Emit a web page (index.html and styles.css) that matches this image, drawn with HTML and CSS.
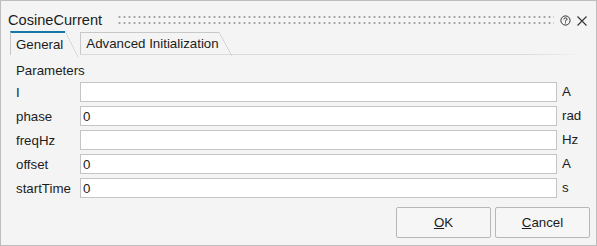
FILE: index.html
```html
<!DOCTYPE html>
<html lang="en">
<head>
    <meta charset="utf-8" />
    <title>CosineCurrent</title>
    <link rel="stylesheet" href="styles.css">
</head>
<body>

    <div class="dialog">

        <div class="titlebar">
            <span class="title">CosineCurrent</span>
            <span class="grip"></span>
            <span class="icon help">
                <svg width="11" height="11" viewBox="0 0 11 11">
                    <circle cx="5.5" cy="5.5" r="4.6" fill="none" stroke="#333" stroke-width="1"/>
                    <path d="M3.9 4.4 Q3.9 2.9 5.5 2.9 Q7.1 2.9 7.1 4.2 Q7.1 5.1 5.5 5.6 L5.5 6.6" fill="none" stroke="#333" stroke-width="1"/>
                    <rect x="5" y="7.3" width="1" height="1.1" fill="#333"/>
                </svg>
            </span>
            <span class="icon close">
                <svg width="10" height="10" viewBox="0 0 10 10">
                    <path d="M0.5 0.5 L9.5 9.5 M9.5 0.5 L0.5 9.5" stroke="#333" stroke-width="1.1"/>
                </svg>
            </span>
        </div>

        <div class="tabstrip">
            <div class="tab active">General</div>
            <div class="tab">Advanced Initialization</div>
            <div class="tabfill"></div>
        </div>

        <div class="panel">
            <div class="group">Parameters</div>

            <div class="params">
                <label>I</label>
                <input class="field" type="text" value="">
                <span class="unit">A</span>

                <label>phase</label>
                <input class="field" type="text" value="0">
                <span class="unit">rad</span>

                <label>freqHz</label>
                <input class="field" type="text" value="">
                <span class="unit">Hz</span>

                <label>offset</label>
                <input class="field" type="text" value="0">
                <span class="unit">A</span>

                <label>startTime</label>
                <input class="field" type="text" value="0">
                <span class="unit">s</span>
            </div>
        </div>

        <div class="footer">
            <button class="btn"><u>O</u>K</button>
            <button class="btn"><u>C</u>ancel</button>
        </div>

    </div>

</body>
</html>
```

FILE: styles.css
```css
body{
    margin: 0;
    background: #f4f4f4;
}

.dialog{
    width: 597px;
    height: 246px;
    box-sizing: border-box;
    border: 1px solid #bdbdbd;
    background: #f4f4f4;
    display: flex;
    flex-direction: column;
    font-family: "Liberation Sans", Arial, sans-serif;
    font-size: 13.3px;
    color: #1c1c1c;
}

/* title bar */
.titlebar{
    height: 30px;
    box-sizing: border-box;
    padding: 11px 9px 0 7px;
    display: flex;
    align-items: flex-start;
}

.title{
    font-size: 14.6px;
    line-height: 17px;
}

.grip{
    flex: 1;
    height: 12px;
    margin: 2px 6px 0 15px;
    background-image: radial-gradient(circle, #a3a3a3 1px, transparent 1.2px);
    background-size: 5px 6px;
    background-position: 0 0;
}

.icon{
    display: flex;
    margin-top: 3px;
}

.icon svg{
    display: block;
}

.close{
    margin-top: 4px;
    margin-left: 6px;
}

/* tabs */
.tabstrip{
    display: flex;
    height: 24px;
    padding-left: 9px;
}

.tab{
    position: relative;
    height: 23px;
    box-sizing: border-box;
    margin-top: 1px;
    margin-right: 15px;
    padding: 3px 2px 0 5px;
    border-left: 1px solid #c8c8c8;
    border-top: 1px solid #c8c8c8;
    border-bottom: 1px solid #dadada;
    line-height: 16px;
    white-space: nowrap;
}

.tab::after{
    content: "";
    position: absolute;
    top: -1px;
    right: -13px;
    width: 13px;
    height: 24px;
    background: linear-gradient(to bottom left, transparent calc(50% - 0.6px), #c8c8c8 50%, transparent calc(50% + 0.6px));
}

.tab.active{
    margin-top: 0;
    height: 24px;
    padding-top: 4px;
    border-top: 2px solid #1477aa;
    border-bottom: none;
}

.tab.active::after{
    top: -2px;
    height: 26px;
}

.tab + .tab{
    width: 139px;
    padding-left: 5px;
}

.tabfill{
    flex: 1;
    margin-left: -15px;
    margin-right: 16px;
    height: 24px;
    box-sizing: border-box;
    border-bottom: 1px solid;
    border-image: linear-gradient(to right, #dadada 85%, rgba(218,218,218,0)) 1;
}

/* content */
.panel{
    padding: 8px 0 0 15px;
}

.group{
    line-height: 15px;
}

.params{
    display: grid;
    grid-template-columns: 64px 477px auto;
    grid-auto-rows: 20px;
    row-gap: 4px;
    margin-top: 4px;
    align-items: center;
}

.field{
    box-sizing: border-box;
    width: 477px;
    height: 20px;
    margin: 0;
    padding: 0 3px 0 2px;
    border: 1px solid #c4c4c4;
    background: #ffffff;
    font-family: inherit;
    font-size: 13.3px;
    color: #1c1c1c;
    outline: none;
}

.unit{
    padding-left: 5px;
    line-height: 16px;
}

/* buttons */
.footer{
    margin-top: auto;
    padding: 0 6px 7px 0;
    display: flex;
    justify-content: flex-end;
    gap: 4px;
}

.btn{
    width: 95px;
    height: 31px;
    margin: 0;
    border: 1px solid #b7b7b7;
    border-radius: 2px;
    background: #f6f6f6;
    font-family: inherit;
    font-size: 13.3px;
    color: #1c1c1c;
}
```
